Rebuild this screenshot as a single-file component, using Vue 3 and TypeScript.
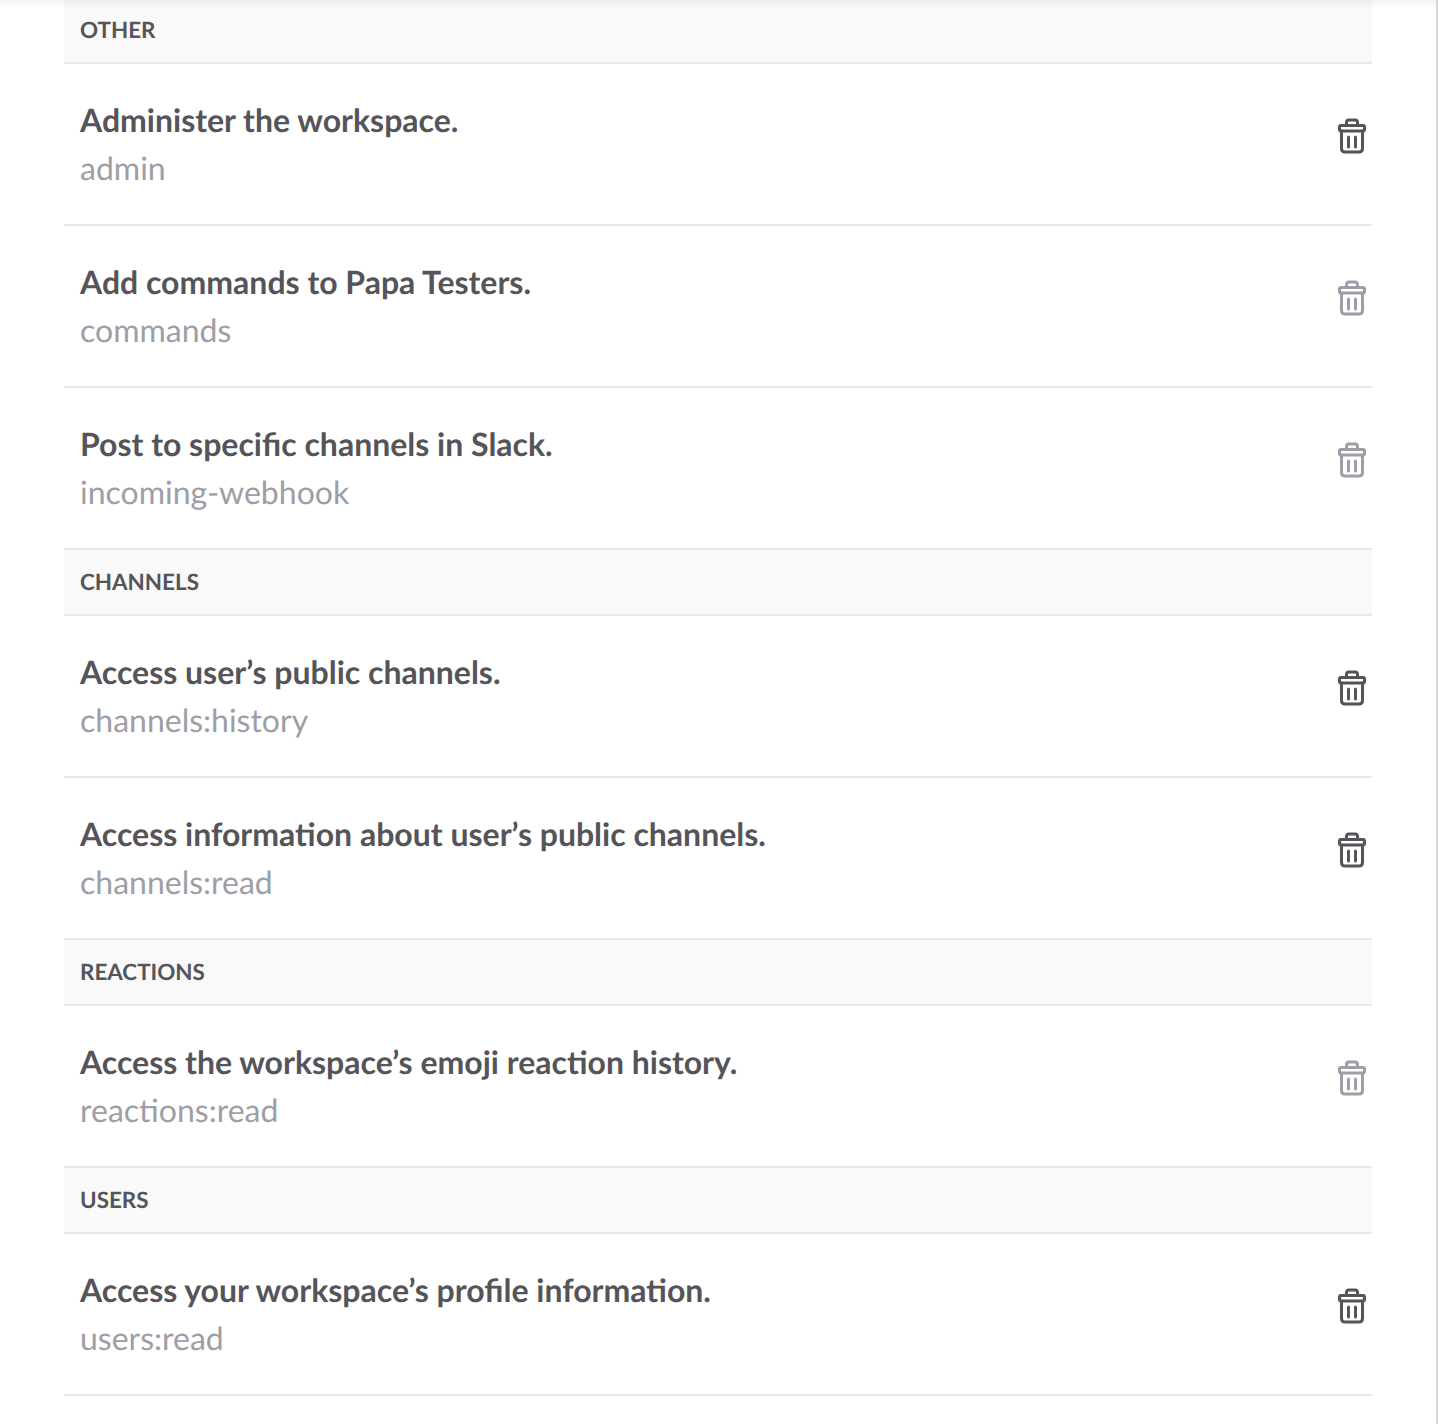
<script setup lang="ts">
interface Scope { title: string; name: string; dark: boolean }
interface Group { label: string; scopes: Scope[] }
const groups: Group[] = [
  { label: 'OTHER', scopes: [
    { title: 'Administer the workspace.', name: 'admin', dark: true },
    { title: 'Add commands to Papa Testers.', name: 'commands', dark: false },
    { title: 'Post to specific channels in Slack.', name: 'incoming-webhook', dark: false },
  ] },
  { label: 'CHANNELS', scopes: [
    { title: 'Access user’s public channels.', name: 'channels:history', dark: true },
    { title: 'Access information about user’s public channels.', name: 'channels:read', dark: true },
  ] },
  { label: 'REACTIONS', scopes: [
    { title: 'Access the workspace’s emoji reaction history.', name: 'reactions:read', dark: false },
  ] },
  { label: 'USERS', scopes: [
    { title: 'Access your workspace’s profile information.', name: 'users:read', dark: true },
  ] },
]
</script>

<template>
  <div class="page">
    <div class="list">
      <section v-for="g in groups" :key="g.label">
        <h3 class="head">{{ g.label }}</h3>
        <div v-for="s in g.scopes" :key="s.name" class="row">
          <div class="text">
            <div class="title">{{ s.title }}</div>
            <div class="name">{{ s.name }}</div>
          </div>
          <svg class="trash" :class="{ dark: s.dark }" width="28" height="36" viewBox="0 0 28 36" fill="none" stroke="currentColor" stroke-width="3" stroke-linejoin="round" stroke-linecap="round">
            <path d="M8.500 7.500V4.500Q8.500 2 11 2H17Q19.500 2 19.500 4.500V7.500" />
            <rect x="1.500" y="7.500" width="25" height="5.500" rx="1.500" />
            <path d="M3.500 13V30.500Q3.500 34 7 34H21Q24.500 34 24.500 30.500V13" />
            <path d="M10.500 19V29M17.500 19V29" />
          </svg>
        </div>
      </section>
    </div>
  </div>
</template>

<style scoped>
.page {
  position: relative;
  height: 1424px;
  box-sizing: border-box;
  overflow: hidden;
  padding: 0 64px;
  border-right: 2px solid #d8d8d8;
  font-family: Lato, "Liberation Sans", sans-serif;
  text-rendering: geometricPrecision;
}
.page::before {
  content: "";
  position: absolute;
  top: 0;
  left: 0;
  right: 0;
  height: 8px;
  background: linear-gradient(rgba(0, 0, 0, 0.05), rgba(0, 0, 0, 0));
}
.list {
  margin-top: -2px;
}
.head {
  margin: 0;
  padding: 0 16px 2px;
  box-sizing: border-box;
  height: 66px;
  display: flex;
  align-items: center;
  background: #f9f9f9;
  border-bottom: 2px solid #e8e8e8;
  font-size: 22.400px;
  font-weight: 700;
  color: #555459;
}
.row {
  height: 160px;
  padding: 0 6px 0 16px;
  display: flex;
  align-items: center;
  justify-content: space-between;
  border-bottom: 2px solid #e8e8e8;
}
.title {
  font-size: 32px;
  line-height: 48px;
  font-weight: 700;
  color: #555459;
}
.name {
  font-size: 32px;
  line-height: 48px;
  color: #9e9ea6;
}
.trash {
  margin-bottom: 16px;
  color: #9e9ea6;
}
.trash.dark {
  color: #555459;
}
</style>
